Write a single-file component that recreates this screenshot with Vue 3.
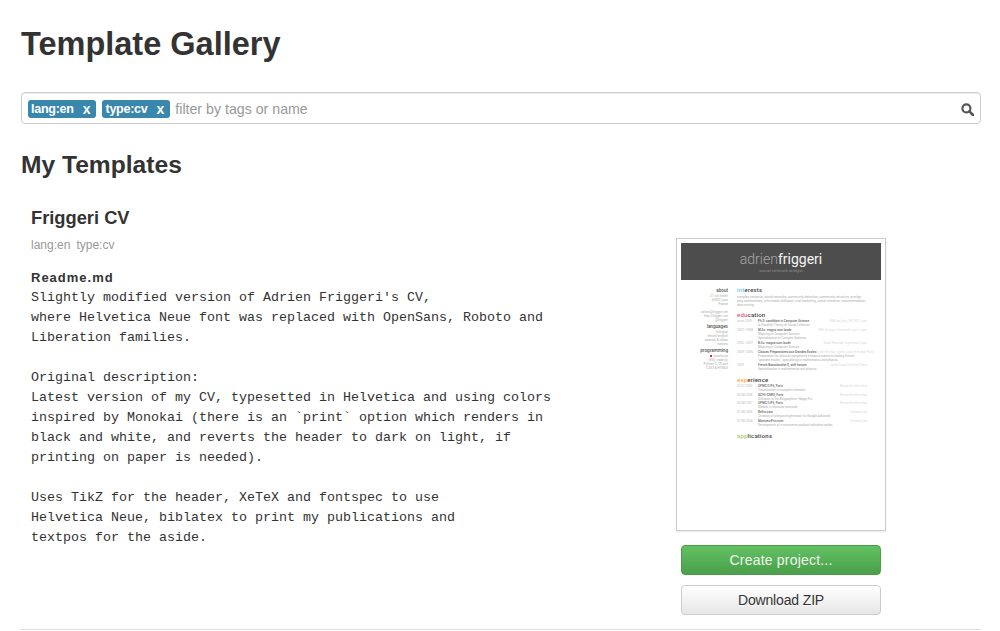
<script setup>
const tags = ['lang:en', 'type:cv']

const readme = `Slightly modified version of Adrien Friggeri's CV,
where Helvetica Neue font was replaced with OpenSans, Roboto and
Liberation families.

Original description:
Latest version of my CV, typesetted in Helvetica and using colors
inspired by Monokai (there is an \`print\` option which renders in
black and white, and reverts the header to dark on light, if
printing on paper is needed).

Uses TikZ for the header, XeTeX and fontspec to use
Helvetica Neue, biblatex to print my publications and
textpos for the aside.`

const education = [
  { date: 'since 2009', title: 'Ph.D. candidate in Computer Science', where: 'ENS de Lyon, LIP, IXXI, Lyon', lines: ['A (Parallel) Theory of Social Cohesion'] },
  { date: '2007–2008', title: 'M.Sc. magna cum laude', where: 'ENS de Lyon, Université Lyon I, Lyon', lines: ['Majoring in Computer Science', 'Specialization in Complex Systems'] },
  { date: '2006–2007', title: 'B.Sc. magna cum laude', where: 'Ecole Normale Supérieure, Lyon', lines: ['Majoring in Computer Science'] },
  { date: '2003–2006', title: 'Classes Préparatoires aux Grandes Écoles', where: 'Lycée Fénelon, Lycée Louis le Grand, Paris', lines: ['Preparation for national competitive entrance exams to leading French', '"grandes écoles", specializing in mathematics and physics.'] },
  { date: '2003', title: 'French Baccalauréat S, with honors', where: 'Lycée Louis le Grand, Paris', lines: ['Specialization in mathematics and physics'] },
]

const experience = [
  { date: '02.07.2009', title: 'UPMC/LIP6, Paris', where: 'Research internship', lines: ['Visualization of complex networks'] },
  { date: '06.08.2008', title: 'GCFS-CNRS, Paris', where: 'Research internship', lines: ['Diffusion in the Blogosphere: Happy Flu'] },
  { date: '06.08.2007', title: 'UPMC/LIP6, Paris', where: 'Research internship', lines: ['Models in neuronal networks'] },
  { date: '07.08.2006', title: 'Refinr.com', where: 'Summer job', lines: ['Creation of a keyword generator for Google Adwords'] },
  { date: '07.08.2004', title: 'MonsieurPrix.com', where: 'Summer job', lines: ['Development of e-commerce product indication spider'] },
]
</script>

<template>
  <div class="page">
    <h1>Template Gallery</h1>

    <div class="search">
      <span v-for="tag in tags" :key="tag" class="tag">{{ tag }}<span class="tag-x">x</span></span>
      <span class="placeholder">filter by tags or name</span>
      <svg class="search-icon" width="13" height="13" viewBox="0 0 13 13">
        <circle cx="5.4" cy="5.4" r="4" fill="none" stroke="#555" stroke-width="2.2" />
        <path d="M8.4 8.4 L12 12" stroke="#555" stroke-width="2.6" stroke-linecap="round" />
      </svg>
    </div>

    <h2>My Templates</h2>

    <div class="template">
      <div class="info">
        <h3>Friggeri CV</h3>
        <div class="meta"><span>lang:en</span><span>type:cv</span></div>
        <div class="readme-title">Readme.md</div>
        <pre class="readme">{{ readme }}</pre>
      </div>

      <div class="side">
        <div class="thumb">
          <div class="cv-head">
            <div class="cv-name"><span class="thin">adrien</span><span class="bold">friggeri</span></div>
            <div class="cv-sub">social network analyst</div>
          </div>
          <div class="cv-body">
            <div class="cv-aside">
              <b>about</b>
              <span>21 rue Smith</span>
              <span>69002 Lyon</span>
              <span>France</span>
              <i></i>
              <span>adrien@friggeri.net</span>
              <span>http://friggeri.net</span>
              <span>@friggeri</span>
              <b>languages</b>
              <span>bilingual</span>
              <span>french/english</span>
              <span>spanish &amp; italian</span>
              <span>notions</span>
              <b>programming</b>
              <span><em></em>JavaScript</span>
              <span>(ES6, node.js)</span>
              <span>Python, C, OCaml</span>
              <span>CSS3 &amp; HTML5</span>
            </div>
            <div class="cv-main">
              <div class="cv-title"><span class="c-blue">int</span>erests</div>
              <p class="cv-par">complex networks, social networks, community detection, community structure, overlap-ping communities, information diffusion, viral marketing, social inference, recommendation, data mining</p>

              <div class="cv-title"><span class="c-pink">edu</span>cation</div>
              <div v-for="row in education" :key="row.date" class="cv-row">
                <div class="cv-date">{{ row.date }}</div>
                <div class="cv-text">
                  <div class="cv-top"><b>{{ row.title }}</b><span>{{ row.where }}</span></div>
                  <div v-for="line in row.lines" :key="line">{{ line }}</div>
                </div>
              </div>

              <div class="cv-title gap"><span class="c-orange">exp</span>erience</div>
              <div v-for="row in experience" :key="row.date + row.title" class="cv-row tight">
                <div class="cv-date">{{ row.date }}</div>
                <div class="cv-text">
                  <div class="cv-top"><b>{{ row.title }}</b><span>{{ row.where }}</span></div>
                  <div v-for="line in row.lines" :key="line">{{ line }}</div>
                </div>
              </div>

              <div class="cv-title gap"><span class="c-green">app</span>lications</div>
            </div>
          </div>
        </div>
        <button class="btn btn-green">Create project...</button>
        <button class="btn btn-white">Download ZIP</button>
      </div>
    </div>

    <hr />
  </div>
</template>

<style>
html, body {
  margin: 0;
  background: #fff;
  overflow: hidden;
}
</style>

<style scoped>
.page {
  width: 960px;
  margin-left: 21px;
  height: 631px;
  font-family: "Liberation Sans", Arial, sans-serif;
  color: #333;
  overflow: hidden;
}

h1 {
  margin: 0;
  padding-top: 25px;
  font-size: 32.5px;
  line-height: 38px;
  font-weight: bold;
}

.search {
  margin-top: 29px;
  height: 32px;
  box-sizing: border-box;
  border: 1px solid #ccc;
  border-radius: 4px;
  box-shadow: inset 0 1px 1px rgba(0, 0, 0, 0.075);
  display: flex;
  align-items: center;
  padding: 2px 6px 0 6px;
}

.tag {
  height: 18px;
  line-height: 18px;
  background: #3a87ad;
  color: #fff;
  font-size: 12.6px;
  font-weight: bold;
  border-radius: 3px;
  padding: 0 6px 0 3px;
  margin-right: 6px;
  display: flex;
  letter-spacing: -0.3px;
}

.tag-x {
  margin-left: 9px;
  font-size: 14px;
  letter-spacing: 0;
}

.placeholder {
  font-size: 14.2px;
  color: #999;
  margin-left: -1px;
}

.search-icon {
  margin-left: auto;
}

h2 {
  margin: 26px 0 0;
  font-size: 24.6px;
  line-height: 30px;
  font-weight: bold;
}

.template {
  display: flex;
  justify-content: space-between;
}

.info {
  padding: 27px 0 0 10px;
}

h3 {
  margin: 0;
  font-size: 18.3px;
  line-height: 22px;
  font-weight: bold;
}

.meta {
  margin-top: 8px;
  font-size: 12px;
  line-height: 16px;
  color: #999;
  display: flex;
  gap: 6px;
}

.readme-title {
  margin-top: 15px;
  font-size: 13px;
  line-height: 20px;
  font-weight: bold;
  letter-spacing: 1px;
}

.readme {
  margin: 0;
  font-family: "Liberation Mono", "Courier New", monospace;
  font-size: 13.33px;
  line-height: 20px;
  color: #333;
}

.side {
  width: 210px;
  margin-right: 95px;
  padding-top: 58px;
  display: flex;
  flex-direction: column;
  align-items: center;
}

.thumb {
  width: 210px;
  height: 293px;
  box-sizing: border-box;
  border: 1px solid #ccc;
  padding: 4px;
  background: #fff;
  box-shadow: 0 1px 2px rgba(0, 0, 0, 0.1);
  overflow: hidden;
}

.cv-head {
  height: 37px;
  background: #4d4d4d;
  text-align: center;
  padding-top: 9px;
  box-sizing: border-box;
}

.cv-name {
  font-family: Roboto, "Liberation Sans", sans-serif;
  font-size: 14px;
  line-height: 15px;
  color: #f4f4f4;
}

.cv-name .thin {
  font-weight: 300;
  color: #a8a8a8;
}

.cv-name .bold {
  font-weight: 400;
}

.cv-sub {
  font-family: Roboto, "Liberation Sans", sans-serif;
  font-size: 4.4px;
  line-height: 7px;
  color: #8a8a8a;
}

.cv-body {
  display: grid;
  grid-template-columns: 47px 130px;
  column-gap: 9px;
  padding-top: 6px;
  font-family: Roboto, "Liberation Sans", sans-serif;
}

.cv-aside {
  display: flex;
  flex-direction: column;
  align-items: flex-end;
  font-size: 3.2px;
  line-height: 4px;
  color: #aaa;
  white-space: nowrap;
}

.cv-aside b {
  font-size: 4.6px;
  line-height: 6px;
  font-weight: 500;
  color: #555;
  margin-top: 2px;
}

.cv-aside i {
  height: 4px;
}

.cv-aside em {
  display: inline-block;
  width: 2px;
  height: 2px;
  background: #e91e63;
  margin-right: 1px;
}

.cv-title {
  font-size: 6px;
  line-height: 8px;
  font-weight: 500;
  color: #444;
  letter-spacing: 0.2px;
}

.cv-title.gap {
  margin-top: 5px;
}

.c-blue { color: #66ccee; }
.c-pink { color: #ec4f86; }
.c-orange { color: #ffa93a; }
.c-green { color: #a6d06a; }

.cv-par {
  margin: 1px 0 4px;
  font-size: 3.2px;
  line-height: 4px;
  color: #aaa;
}

.cv-row {
  display: grid;
  grid-template-columns: 21px 1fr;
  font-size: 3.1px;
  line-height: 4px;
  color: #aaa;
  margin-bottom: 1px;
}

.cv-row.tight {
  margin-bottom: 0.7px;
}

.cv-date {
  color: #bbb;
}

.cv-top {
  display: flex;
  justify-content: space-between;
  white-space: nowrap;
}

.cv-top b {
  font-weight: 500;
  color: #666;
}

.cv-top span {
  color: #d8d8d8;
}

.btn {
  width: 200px;
  height: 30px;
  box-sizing: border-box;
  border-radius: 4px;
  font-family: "Liberation Sans", Arial, sans-serif;
  font-size: 14px;
  padding: 0;
}

.btn-green {
  margin-top: 14px;
  color: #eef7ee;
  border: 1px solid #4a9c4a;
  background: linear-gradient(to bottom, #62c162, #4a9f4a);
  letter-spacing: 0.2px;
}

.btn-white {
  margin-top: 10px;
  color: #333;
  border: 1px solid #ccc;
  background: linear-gradient(to bottom, #fff, #e6e6e6);
  text-shadow: 0 1px 0 #fff;
  letter-spacing: -0.15px;
}

hr {
  margin: 14px 0 0;
  border: 0;
  border-top: 1px solid #ddd;
}
</style>
